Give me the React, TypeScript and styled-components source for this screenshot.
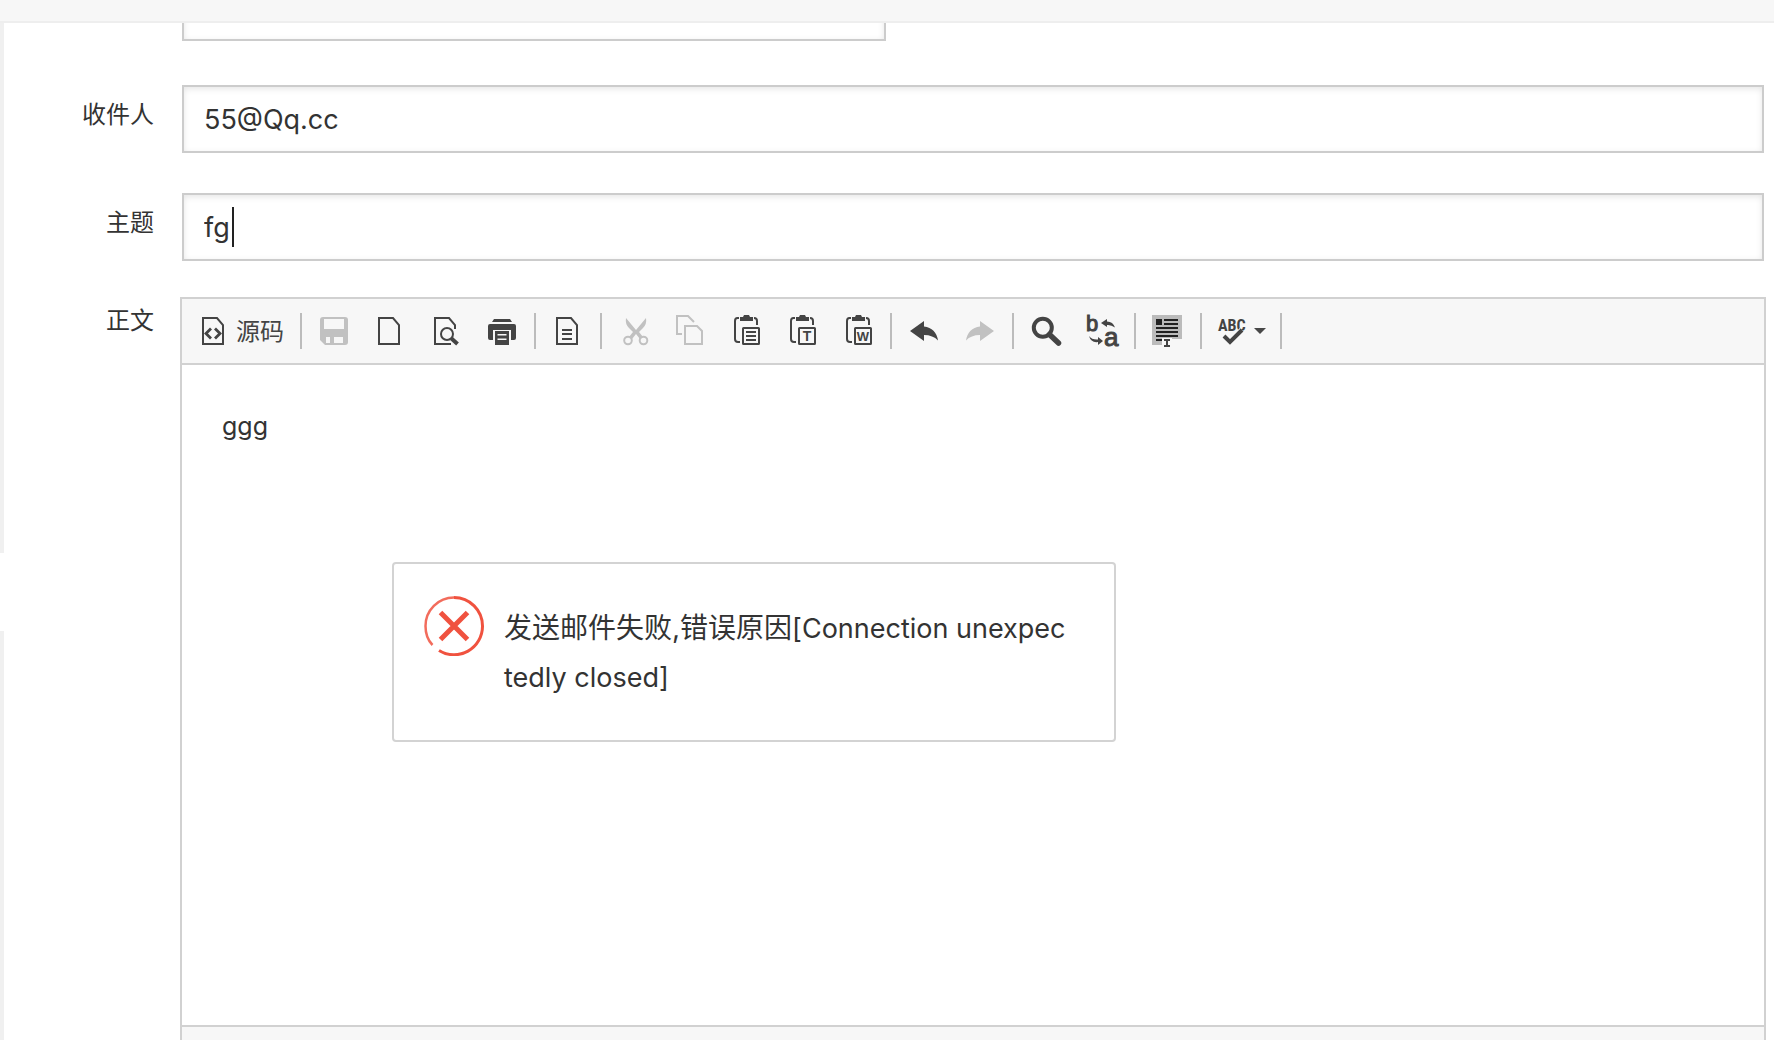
import React from "react";
import styled, { createGlobalStyle } from "styled-components";

const fontStack = `Inter, "Noto Sans CJK SC", sans-serif`;

const GlobalStyle = createGlobalStyle`
  *, *::before, *::after { box-sizing: border-box; }
  body { margin: 0; background: #fff; color: #333; font-family: ${fontStack}; }
`;

const Page = styled.div`
  display: flex;
  flex-direction: column;
  height: 100vh;
  overflow: hidden;
`;

const TopBar = styled.header`
  flex: none;
  height: 23px;
  background: #f7f7f7;
  border-bottom: 2px solid #eee;
`;

const Body = styled.div`
  display: flex;
  flex: 1;
  min-height: 0;
`;

const Rail = styled.aside`
  display: flex;
  flex-direction: column;
  flex: none;
  width: 4px;
  background: #f0f0f0;
`;

const RailHandle = styled.span`
  height: 78px;
  margin-top: 530px;
  background: #fff;
`;

const Scroller = styled.main`
  flex: 1;
  min-width: 0;
  overflow: hidden;
`;

const Form = styled.form`
  display: flex;
  flex-direction: column;
  margin-top: -50px;
  padding-right: 8px;
`;

const Row = styled.div<{ $gap: number }>`
  display: flex;
  align-items: flex-start;
  gap: 26px;
  margin-bottom: ${(p) => p.$gap}px;
`;

const Label = styled.label<{ $top: number }>`
  flex: none;
  width: 150px;
  padding-top: ${(p) => p.$top}px;
  font-size: 24px;
  line-height: 36px;
  text-align: right;
`;

const Field = styled.div`
  position: relative;
  flex: 1;
  padding: 0 2px;
`;

const TextInput = styled.input<{ $max?: number }>`
  display: block;
  width: 100%;
  max-width: ${(p) => (p.$max ? `${p.$max}px` : "none")};
  height: 68px;
  padding: 0 20px;
  border: 2px solid #ccc;
  border-radius: 0;
  background: #fff;
  box-shadow: inset 0 2px 6px rgba(0, 0, 0, 0.1);
  color: #333;
  font-family: ${fontStack};
  font-size: 27px;
  outline: none;
`;

const Caret = styled.span`
  position: absolute;
  top: 14px;
  left: 52px;
  width: 2px;
  height: 40px;
  background: #222;
`;

const Editor = styled.section`
  flex: 1;
  min-width: 0;
  border: 2px solid #d1d1d1;
`;

const Toolbar = styled.div`
  display: flex;
  align-items: center;
  height: 66px;
  padding: 0 4px;
  background: #f7f7f7;
  border-bottom: 2px solid #d1d1d1;
`;

const ToolButton = styled.button`
  display: flex;
  align-items: center;
  height: 48px;
  padding: 0 12px;
  border: 0;
  background: none;
  color: #444;
  font-family: ${fontStack};
  font-size: 24px;
  gap: 6px;
  &:disabled { color: #c1c1c1; }
`;

const MenuButton = styled(ToolButton)`
  padding-right: 10px;
  gap: 4px;
`;

const ToolText = styled.span`
  padding-bottom: 4px;
`;

const Arrow = styled.span`
  border: 6px solid transparent;
  border-top-color: #484848;
  border-bottom: 0;
`;

const Separator = styled.span`
  width: 2px;
  height: 36px;
  margin: 0 4px;
  background: #bcbcbc;
`;

const Glyph = styled.svg`
  display: block;
  flex: none;
  width: 32px;
  height: 32px;
  overflow: visible;
`;

const Content = styled.textarea`
  display: block;
  width: 100%;
  height: 660px;
  padding: 40px;
  border: 0;
  background: #fff;
  color: #333;
  font-family: ${fontStack};
  font-size: 25px;
  line-height: 42px;
  resize: none;
  outline: none;
`;

const StatusBar = styled.div`
  height: 60px;
  background: #f7f7f7;
  border-top: 2px solid #d1d1d1;
`;

const Dialog = styled.div`
  position: fixed;
  top: 562px;
  left: 392px;
  display: flex;
  gap: 20px;
  width: 724px;
  height: 180px;
  padding: 32px 30px;
  border: 2px solid #d3d3d3;
  border-radius: 4px;
  background: #fff;
`;

const ErrorMark = styled.svg`
  flex: none;
  width: 60px;
  height: 60px;
`;

const Message = styled.p`
  margin: 0;
  padding-top: 8px;
  font-size: 28px;
  line-height: 48px;
  white-space: nowrap;
`;

const Detail = styled.span`
  font-size: 27px;
`;

const INK = "currentColor";
const PAPER = "#f7f7f7";

const Icon = ({ children }: { children: React.ReactNode }) => (
  <Glyph viewBox="0 0 32 32" fill="none" stroke={INK} strokeWidth="2" aria-hidden="true">
    {children}
  </Glyph>
);

const Sheet = () => <path d="M5 3h14l6 7v19H5z" />;

const Clipboard = () => (
  <>
    <path d="M9 3H7.500Q5 3 5 6v18q0 3 3 3h2M24 3q3 0 3 3v4" />
    <path d="M10 2h3l1-2h5l1 2h3v4H10z" fill={INK} stroke="none" />
    <rect x="13" y="13" width="16" height="16" rx="0.500" />
  </>
);

const icons: Record<string, React.ReactNode> = {
  source: (
    <>
      <Sheet />
      <path d="M13 13.500l-5 5 5 5M17 13.500l5 5-5 5" strokeWidth="2.800" />
    </>
  ),
  save: (
    <>
      <path d="M5 2h22q3 0 3 3v22q0 3-3 3H7l-5-5V5q0-3 3-3z" fill={INK} stroke="none" />
      <path d="M6 4h20v10H6zM8 22h17v6H8z" fill={PAPER} stroke="none" />
      <path d="M12 22h4v6h-4z" fill={INK} stroke="none" />
    </>
  ),
  page: <Sheet />,
  preview: (
    <>
      <path d="M25 14v-4l-6-7H5v26h16" />
      <circle cx="17" cy="19" r="6" />
      <path d="M21.500 23.500l6 5.500" strokeWidth="4" />
    </>
  ),
  print: (
    <g fill={INK} stroke="none">
      <path d="M8 4h16l2 3H6z" />
      <path d="M4 9h24q2 0 2 2v12q0 2-2 2h-3V15H7v10H4q-2 0-2-2V11q0-2 2-2z" />
      <path d="M9 16h14v14H9zM11.500 19v1.600h9V19zM11.500 23.500v1.600h9v-1.600z" fillRule="evenodd" />
    </g>
  ),
  template: (
    <>
      <Sheet />
      <path d="M10 15h10M10 19h10M10 24h10" />
    </>
  ),
  cut: (
    <>
      <circle cx="10" cy="25.500" r="3.800" />
      <circle cx="25.500" cy="25.500" r="3.800" />
      <path d="M8 3q-1 6 3 10l4 4-4 5 3 2 4-5 4 5 3-2-4-5 4-4q4-4 3-10l-10 12z" fill={INK} stroke="none" />
    </>
  ),
  copy: (
    <>
      <path d="M8 19H3V1h11l6 6" />
      <path d="M11 11h12l5 5v13H11z" />
    </>
  ),
  paste: (
    <>
      <Clipboard />
      <path d="M16 17h10M16 21h10M16 25h10" />
    </>
  ),
  pasteText: (
    <>
      <Clipboard />
      <text x="21" y="26" textAnchor="middle" fontFamily="Liberation Sans" fontSize="14" fontWeight="700" fill={INK} stroke="none">T</text>
    </>
  ),
  pasteWord: (
    <>
      <Clipboard />
      <text x="21" y="26" textAnchor="middle" fontFamily="Liberation Sans" fontSize="13" fontWeight="700" fill={INK} stroke="none">W</text>
    </>
  ),
  undo: <path d="M2 16L16 6v5.500q12 1.500 14 14-5-5.500-14-5.500v6z" fill={INK} stroke="none" />,
  redo: <path d="M30 16L16 6v5.500q-12 1.500-14 14 5-5.500 14-5.500v6z" fill={INK} stroke="none" />,
  find: (
    <>
      <circle cx="12.800" cy="12.800" r="9" strokeWidth="4" />
      <path d="M19.500 19.500l9 8.500" strokeWidth="5.500" strokeLinecap="round" />
    </>
  ),
  replace: (
    <>
      <text x="0" y="16" fontFamily="Liberation Sans" fontSize="22" fill={INK} strokeWidth="1">b</text>
      <text x="18" y="31" fontFamily="Liberation Sans" fontSize="26" fill={INK} strokeWidth="1">a</text>
      <path d="M15 8l6-4v2.500q6 0 8 6-4-3-8-2.500V12z" fill={INK} stroke="none" />
      <path d="M17 26l-5-4v2.500Q6 25 3 21q2 7 9 6v3z" fill={INK} stroke="none" />
    </>
  ),
  selectAll: (
    <>
      <path d="M0 0h30v24H20v6H0z" fill="#bbb" stroke="none" />
      <path d="M4 4h6v6H4z" fill="#222" stroke="none" />
      <path d="M12 5h14M12 9h14M4 13h22M4 17h22M4 21h22M4 25h6" stroke="#222" />
      <path d="M10 23h10v9H10z" fill={PAPER} stroke="none" />
      <path d="M12 25h6M12 31h6M15 25v6" />
    </>
  ),
  spell: (
    <>
      <text x="0" y="16" fontFamily="Liberation Sans Narrow, Roboto Condensed, Liberation Mono" fontSize="16" fontWeight="700" fill={INK} stroke="none">ABC</text>
      <path d="M6 21l6 6 12-12" stroke={PAPER} strokeWidth="6" />
      <path d="M6 21l6 6 12-12" strokeWidth="4" />
    </>
  ),
};

type Tool = { icon: string; name: string; disabled?: boolean; text?: string; menu?: boolean };

const groups: Tool[][] = [
  [{ icon: "source", name: "源码", text: "源码" }],
  [
    { icon: "save", name: "保存", disabled: true },
    { icon: "page", name: "新建" },
    { icon: "preview", name: "预览" },
    { icon: "print", name: "打印" },
  ],
  [{ icon: "template", name: "模板" }],
  [
    { icon: "cut", name: "剪切", disabled: true },
    { icon: "copy", name: "复制", disabled: true },
    { icon: "paste", name: "粘贴" },
    { icon: "pasteText", name: "粘贴为无格式文本" },
    { icon: "pasteWord", name: "从 MS Word 粘贴" },
  ],
  [
    { icon: "undo", name: "撤消" },
    { icon: "redo", name: "重做", disabled: true },
  ],
  [
    { icon: "find", name: "查找" },
    { icon: "replace", name: "替换" },
  ],
  [{ icon: "selectAll", name: "全选" }],
  [{ icon: "spell", name: "即时拼写检查", menu: true }],
];

const ToolItem = ({ tool }: { tool: Tool }) => {
  const Button = tool.menu ? MenuButton : ToolButton;
  return (
    <Button type="button" aria-label={tool.name} disabled={tool.disabled}>
      <Icon>{icons[tool.icon]}</Icon>
      {tool.text && <ToolText>{tool.text}</ToolText>}
      {tool.menu && <Arrow />}
    </Button>
  );
};

export default function App() {
  return (
    <>
      <GlobalStyle />
      <Page>
        <TopBar />
        <Body>
          <Rail>
            <RailHandle />
          </Rail>
          <Scroller>
            <Form>
              <Row $gap={44}>
                <Label as="span" $top={12} />
                <Field>
                  <TextInput $max={704} type="text" aria-label="发件人" />
                </Field>
              </Row>
              <Row $gap={40}>
                <Label $top={12} htmlFor="to">收件人</Label>
                <Field>
                  <TextInput id="to" type="text" defaultValue="55@Qq.cc" />
                </Field>
              </Row>
              <Row $gap={36}>
                <Label $top={12} htmlFor="subject">主题</Label>
                <Field>
                  <TextInput id="subject" type="text" defaultValue="fg" />
                  <Caret />
                </Field>
              </Row>
              <Row $gap={0}>
                <Label $top={6} htmlFor="content">正文</Label>
                <Editor>
                  <Toolbar role="toolbar">
                    {groups.map((group, index) => (
                      <React.Fragment key={index}>
                        {group.map((tool) => (
                          <ToolItem key={tool.icon} tool={tool} />
                        ))}
                        <Separator />
                      </React.Fragment>
                    ))}
                  </Toolbar>
                  <Content id="content" defaultValue="ggg" spellCheck={false} />
                  <StatusBar />
                </Editor>
              </Row>
            </Form>
          </Scroller>
        </Body>
      </Page>
      <Dialog role="alertdialog" aria-labelledby="message">
        <ErrorMark viewBox="0 0 60 60" fill="none" stroke="#f0523f" aria-hidden="true">
          <path d="M15 54.500A28.500 28.500 0 0 0 58.500 30 28.500 28.500 0 0 0 30 1.500" strokeWidth="3" />
          <path d="M30 1.500A28.500 28.500 0 0 0 1.500 30q0 12 7 19" strokeWidth="2.500" opacity="0.850" />
          <path d="M16.500 16.500l27 27M43.500 16.500l-27 27" strokeWidth="5" />
        </ErrorMark>
        <Message id="message">
          发送邮件失败,错误原因
          <Detail>
            [Connection unexpec
            <br />
            tedly closed]
          </Detail>
        </Message>
      </Dialog>
    </>
  );
}
